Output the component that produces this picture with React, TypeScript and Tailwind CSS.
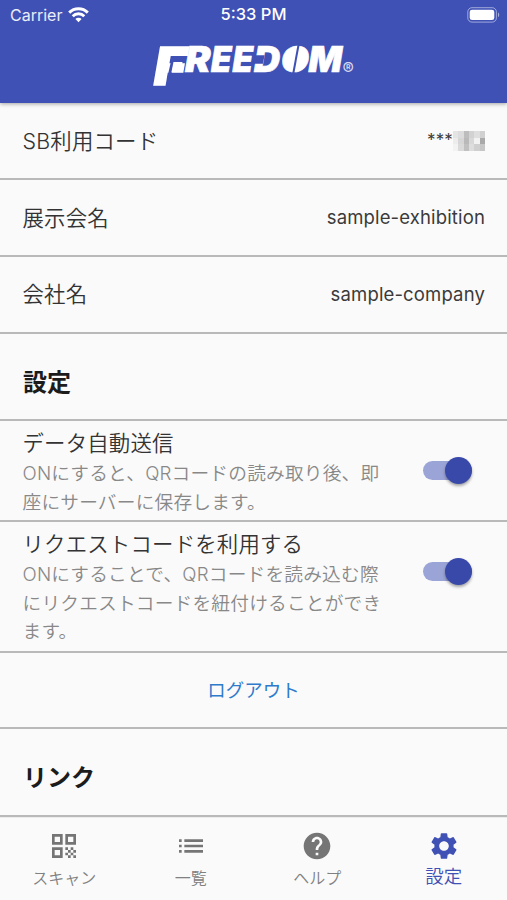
import React, { useState } from 'react';
import { MdHelp, MdList, MdQrCode, MdSettings } from 'react-icons/md';

interface InfoRowProps {
  label: string;
  children: React.ReactNode;
}

interface SwitchRowProps {
  title: string;
  lines: string[];
  checked: boolean;
  onChange: () => void;
  className: string;
}

const MOSAIC = [
  'bg-[#e4e4e4]', 'bg-[#dcdcdc]', 'bg-[#bdbdbd]', 'bg-[#d2d2d2]', 'bg-[#dedede]', 'bg-[#d0d0d0]',
  'bg-[#ececec]', 'bg-[#d6d6d6]', 'bg-[#b9b9b9]', 'bg-[#d8d8d8]', 'bg-[#f2f2f2]', 'bg-[#a9a9a9]',
  'bg-[#f2f2f2]', 'bg-[#dadada]', 'bg-[#c0c0c0]', 'bg-[#dddddd]', 'bg-[#cfcfcf]', 'bg-[#c6c6c6]',
];

const TABS = [
  { label: 'スキャン', Icon: MdQrCode },
  { label: '一覧', Icon: MdList },
  { label: 'ヘルプ', Icon: MdHelp },
  { label: '設定', Icon: MdSettings },
];

const LETTERS = [
  { char: 'R', x: 32, width: 25.5 },
  { char: 'E', x: 58, width: 20.5 },
  { char: 'E', x: 79.5, width: 20.5 },
  { char: 'D', x: 101, width: 26 },
  { char: 'O', x: 128, width: 28 },
  { char: 'M', x: 155.5, width: 33.5 },
];

const StatusBar = () => (
  <div className="relative flex h-[29px] items-center justify-between pl-[10px] pr-[7px] text-[16px] text-white">
    <div className="flex items-center gap-[6px]">
      <span className="text-white/90">Carrier</span>
      <svg width="21" height="16" viewBox="0 0 21 16" fill="none" stroke="white" strokeWidth="2.9">
        <path d="M1.2 5.6a13.2 13.2 0 0 1 18.6 0" />
        <path d="M4.7 9.2a8.2 8.2 0 0 1 11.6 0" />
        <path d="M10.5 15.2 7.4 12a4.4 4.4 0 0 1 6.2 0z" fill="white" stroke="none" />
      </svg>
    </div>
    <span className="absolute left-1/2 -translate-x-1/2 whitespace-nowrap text-[16.5px] font-medium">5:33 PM</span>
    <svg width="33" height="16" viewBox="0 0 33 16">
      <rect x="0.8" y="0.7" width="28.6" height="14.4" rx="4.2" fill="none" stroke="white" strokeOpacity="0.5" />
      <rect x="2.7" y="2.7" width="24.6" height="10.4" rx="2.4" fill="white" />
      <path d="M31 5.6c1.6.6 1.6 4 0 4.6z" fill="white" fillOpacity="0.55" />
    </svg>
  </div>
);

const Logo = () => (
  <svg
    className="overflow-visible font-['Inter','Liberation_Sans',sans-serif] font-black italic"
    width="202"
    height="42"
    viewBox="0 0 202 42"
    fill="white"
  >
    <text x="1" y="38.5" fontSize="52" textLength="32" lengthAdjust="spacingAndGlyphs" stroke="white" strokeWidth="1.4">F</text>
    {/* gap that turns the lower arm of the F into a small block */}
    <path d="M32 12.8H20.2L15.8 32" stroke="#3f51b5" strokeWidth="3.2" fill="none" />
    <path d="M20.5 16h9l-2 10h-9z" />
    {LETTERS.map(({ char, x, width }) => (
      <text
        key={x}
        x={x}
        y="26"
        fontSize="35"
        textLength={width}
        lengthAdjust="spacingAndGlyphs"
        stroke="white"
        strokeWidth="0.7"
      >
        {char}
      </text>
    ))}
    {/* filled O with a slanted slit */}
    <ellipse cx="142.7" cy="13.5" rx="11.5" ry="11.5" />
    <path d="M145.5 -1 140 29" stroke="#3f51b5" strokeWidth="2" />
    {/* open left side of the D */}
    <path d="M101.5 9.2h10l-1.6 8.6h-10z" fill="#3f51b5" />
    <text x="189.5" y="29" fontSize="17" className="font-normal not-italic" fillOpacity="0.8">®</text>
  </svg>
);

const InfoRow: React.FC<InfoRowProps> = ({ label, children }) => (
  <div className="flex h-[76.7px] items-center justify-between border-b-2 border-[#b9b9b9] pl-[22.5px] pr-[22px]">
    <span className="text-[21.4px] font-[350] tracking-[0.2px] text-[#333]">{label}</span>
    <span className="text-[18.5px] tracking-[0.15px] text-[#3a3a3a]">{children}</span>
  </div>
);

const SectionTitle = ({ children }: { children: React.ReactNode }) => (
  <h2 className="flex h-[87.5px] items-center border-b-2 border-[#b9b9b9] pl-[23px] pt-[12px] text-[24px] font-semibold text-[#1c1c1c]">
    {children}
  </h2>
);

const SwitchRow: React.FC<SwitchRowProps> = ({ title, lines, checked, onChange, className }) => (
  <div className={`flex justify-between border-b-2 border-[#b9b9b9] pl-[22.5px] pr-[35px] ${className}`}>
    <div className="pt-[6px]">
      <p className="text-[21.4px] font-[350] leading-[33px] tracking-[0.2px] text-[#333]">{title}</p>
      {lines.map((line) => (
        <p key={line} className="whitespace-nowrap text-[18.7px] font-[350] leading-[28.4px] tracking-[0.2px] text-[#888]">
          {line}
        </p>
      ))}
    </div>
    <button
      role="switch"
      aria-checked={checked}
      aria-label={title}
      onClick={onChange}
      className={`mt-[39.5px] flex h-[19px] w-[49px] items-center rounded-full ${checked ? 'justify-end bg-[#9ba4d6]' : 'justify-start bg-[#9e9e9e]'}`}
    >
      <span className={`size-[27px] shrink-0 rounded-full shadow-[0_2px_3px_rgba(0,0,0,0.35)] ${checked ? 'bg-[#3849aa]' : 'bg-white'}`} />
    </button>
  </div>
);

export default function App() {
  const [autoSend, setAutoSend] = useState(true);
  const [requestCode, setRequestCode] = useState(true);
  const [tab, setTab] = useState('設定');

  return (
    <div className="flex h-[900px] w-full flex-col overflow-hidden bg-[#fafafa] font-['Inter','Noto_Sans_CJK_JP',sans-serif]">
      <header className="z-10 h-[103px] shrink-0 bg-[#3f51b5] shadow-[0_1px_4px_rgba(0,0,0,0.35)]">
        <StatusBar />
        <div className="flex justify-center pt-[17px]">
          <Logo />
        </div>
      </header>

      <main className="h-[714px] shrink-0 pt-[0.8px]">
        <InfoRow label="SB利用コード">
          <span className="flex items-center">
            <span className="text-[17px]">***</span>
            <span className="grid w-[32px] grid-cols-6">
              {MOSAIC.map((shade, i) => (
                <span key={i} className={`h-[6.5px] ${shade}`} />
              ))}
            </span>
          </span>
        </InfoRow>
        <InfoRow label="展示会名">sample-exhibition</InfoRow>
        <InfoRow label="会社名">sample-company</InfoRow>

        <SectionTitle>設定</SectionTitle>
        <SwitchRow
          className="h-[101px]"
          title="データ自動送信"
          lines={['ONにすると、QRコードの読み取り後、即', '座にサーバーに保存します。']}
          checked={autoSend}
          onChange={() => setAutoSend(!autoSend)}
        />
        <SwitchRow
          className="h-[130.5px]"
          title="リクエストコードを利用する"
          lines={['ONにすることで、QRコードを読み込む際', 'にリクエストコードを紐付けることができ', 'ます。']}
          checked={requestCode}
          onChange={() => setRequestCode(!requestCode)}
        />
        <div className="flex h-[76.5px] items-center justify-center border-b-2 border-[#b9b9b9] pt-[2px]">
          <button className="text-[18.5px] text-[#2f7bcb]">ログアウト</button>
        </div>
        <SectionTitle>リンク</SectionTitle>
      </main>

      <nav className="grid flex-1 grid-cols-4 border-t border-[#ececec] pl-px">
        {TABS.map(({ label, Icon }) => (
          <button
            key={label}
            onClick={() => setTab(label)}
            className={`flex flex-col items-center pt-[12px] ${tab === label ? 'text-[#3f51b5]' : 'text-[#757575]'}`}
          >
            <Icon size={32} />
            <span className={tab === label ? 'text-[18.5px] font-[350] leading-[29px]' : 'text-[16px] font-[350] leading-[33px] text-[#808080]'}>
              {label}
            </span>
          </button>
        ))}
      </nav>
    </div>
  );
}
